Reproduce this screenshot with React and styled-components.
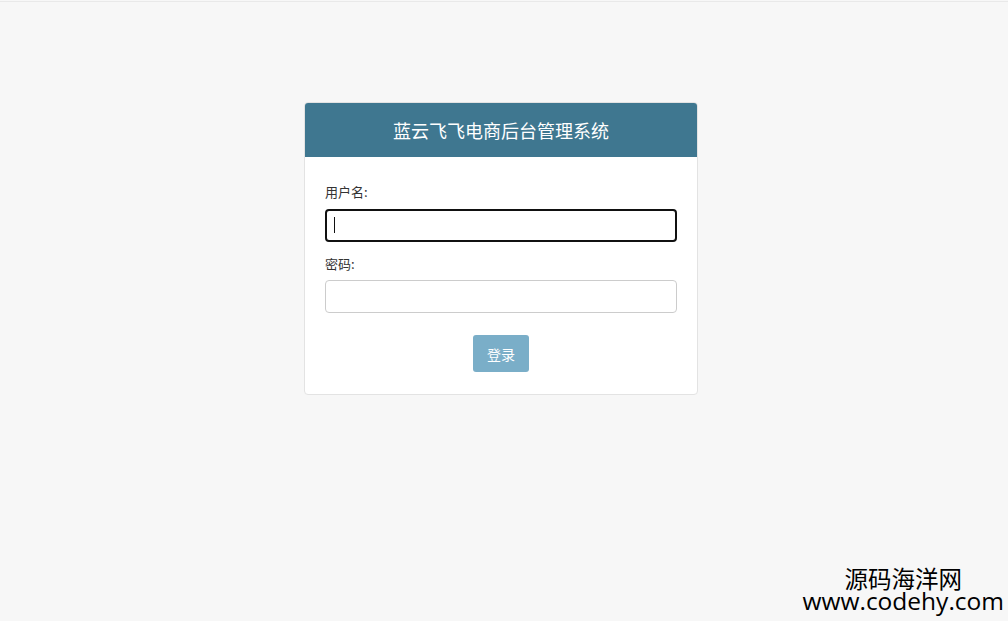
import React from "react";
import styled, { createGlobalStyle } from "styled-components";

const GlobalStyle = createGlobalStyle`
  html, body {
    margin: 0;
    padding: 0;
    background: #f7f7f7;
    font-family: "Noto Sans CJK SC", "Noto Sans", sans-serif;
  }
`;

const Page = styled.div`
  position: relative;
  height: 621px;
  box-sizing: border-box;
  border-top: 1px solid #f7f7f7;
  display: flex;
  justify-content: center;
  align-items: flex-start;
  padding: 101px 6px 0 0;
  overflow: hidden;

  &::before {
    content: "";
    position: absolute;
    left: 0;
    right: 0;
    top: 0;
    height: 1px;
    background: #e9e9e9;
  }
`;

const Card = styled.div`
  width: 392px;
  background: #fff;
  border: 1px solid #e3e3e3;
  border-radius: 4px;
  overflow: hidden;
`;

const Header = styled.div`
  height: 55px;
  margin: -1px -1px 0;
  background: #3f7790;
  border-radius: 4px 4px 0 0;
  color: #fff;
  font-size: 18px;
  display: flex;
  align-items: center;
  justify-content: center;
`;

const Form = styled.form`
  padding: 27px 20px 22px;
  display: flex;
  flex-direction: column;
`;

const Label = styled.label`
  font-size: 13px;
  line-height: 16px;
  color: #333;
  margin-bottom: ${(p) => (p.$first ? "9px" : "8px")};
`;

const Input = styled.input`
  box-sizing: border-box;
  width: 100%;
  height: 33px;
  border: ${(p) => (p.$focused ? "2px solid #111" : "1px solid #ccc")};
  border-radius: 4px;
  padding: 0 8px;
  font-size: 14px;
  outline: none;
  margin-bottom: ${(p) => (p.$last ? "22px" : "14px")};
  background: #fff;
`;

const Caret = styled.span`
  position: absolute;
  left: 9px;
  top: 8px;
  width: 1px;
  height: 16px;
  background: #111;
`;

const Field = styled.div`
  position: relative;
`;

const Submit = styled.button`
  align-self: center;
  width: 56px;
  height: 37px;
  border: none;
  border-radius: 3px;
  background: #7aaec8;
  color: #fff;
  font-family: inherit;
  font-size: 14px;
  cursor: pointer;
`;

const Watermark = styled.div`
  position: absolute;
  right: 4px;
  bottom: 8px;
  display: flex;
  flex-direction: column;
  align-items: center;
  color: #000;
  line-height: 1;
`;

const MarkCn = styled.span`
  font-family: "Noto Sans CJK SC", sans-serif;
  font-size: 23.5px;
  line-height: 21px;
`;

const MarkUrl = styled.span`
  font-family: "Open Sans", "DejaVu Sans", sans-serif;
  font-size: 24.5px;
  line-height: 24px;
`;

export default function App() {
  return (
    <>
      <GlobalStyle />
      <Page>
        <Card>
          <Header>蓝云飞飞电商后台管理系统</Header>
          <Form onSubmit={(e) => e.preventDefault()}>
            <Label $first>用户名:</Label>
            <Field>
              <Input type="text" $focused />
              <Caret />
            </Field>
            <Label>密码:</Label>
            <Input type="password" $last />
            <Submit type="submit">登录</Submit>
          </Form>
        </Card>
        <Watermark>
          <MarkCn>源码海洋网</MarkCn>
          <MarkUrl>www.codehy.com</MarkUrl>
        </Watermark>
      </Page>
    </>
  );
}
